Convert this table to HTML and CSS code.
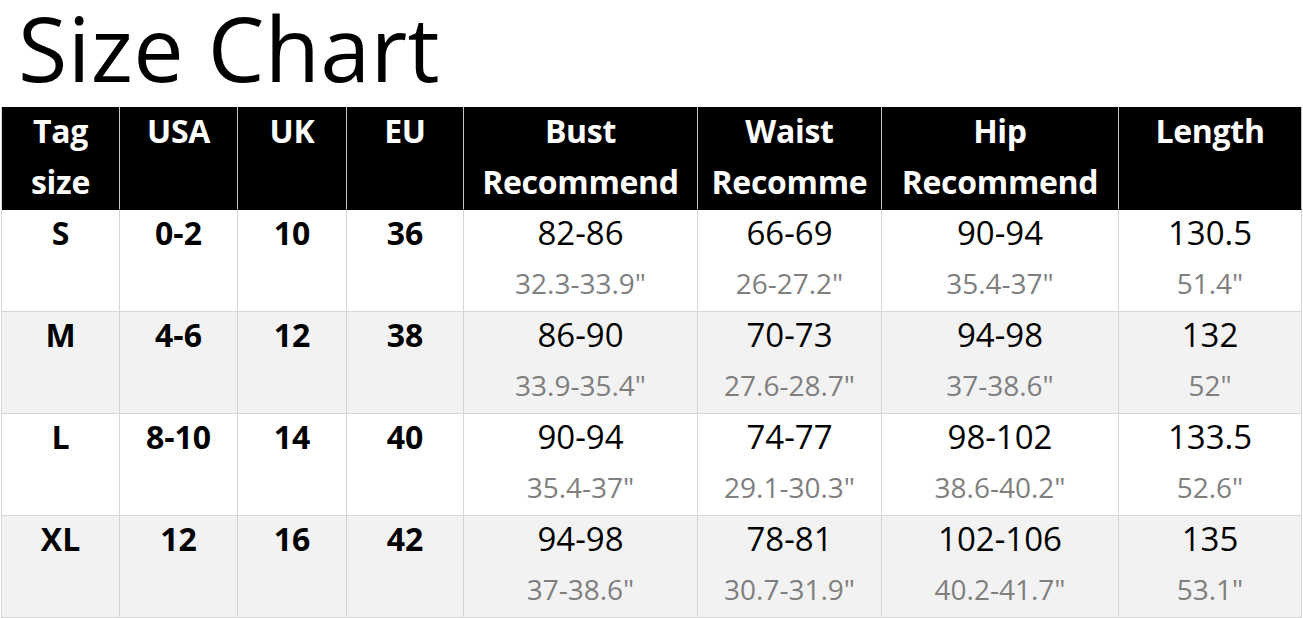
FILE: index.html
```html
<!DOCTYPE html>
<html lang="en">
<head>
<meta charset="utf-8">
<title>Size Chart</title>
<link rel="stylesheet" href="styles.css">
</head>
<body>
<h1 class="title">Size Chart</h1>
<div class="chart">
  <div class="cell head"><div class="htext">Tag<br>size</div></div>
  <div class="cell head"><div class="htext">USA</div></div>
  <div class="cell head"><div class="htext">UK</div></div>
  <div class="cell head"><div class="htext">EU</div></div>
  <div class="cell head"><div class="htext">Bust<br>Recommend</div></div>
  <div class="cell head"><div class="htext">Waist<br>Recomme</div></div>
  <div class="cell head"><div class="htext">Hip<br>Recommend</div></div>
  <div class="cell head"><div class="htext">Length</div></div>

  <div class="cell"><div class="bold">S</div></div>
  <div class="cell"><div class="bold">0-2</div></div>
  <div class="cell"><div class="bold">10</div></div>
  <div class="cell"><div class="bold">36</div></div>
  <div class="cell"><div class="val">82-86</div><div class="inch">32.3-33.9"</div></div>
  <div class="cell"><div class="val">66-69</div><div class="inch">26-27.2"</div></div>
  <div class="cell"><div class="val">90-94</div><div class="inch">35.4-37"</div></div>
  <div class="cell"><div class="val">130.5</div><div class="inch">51.4"</div></div>

  <div class="cell alt"><div class="bold">M</div></div>
  <div class="cell alt"><div class="bold">4-6</div></div>
  <div class="cell alt"><div class="bold">12</div></div>
  <div class="cell alt"><div class="bold">38</div></div>
  <div class="cell alt"><div class="val">86-90</div><div class="inch">33.9-35.4"</div></div>
  <div class="cell alt"><div class="val">70-73</div><div class="inch">27.6-28.7"</div></div>
  <div class="cell alt"><div class="val">94-98</div><div class="inch">37-38.6"</div></div>
  <div class="cell alt"><div class="val">132</div><div class="inch">52"</div></div>

  <div class="cell"><div class="bold">L</div></div>
  <div class="cell"><div class="bold">8-10</div></div>
  <div class="cell"><div class="bold">14</div></div>
  <div class="cell"><div class="bold">40</div></div>
  <div class="cell"><div class="val">90-94</div><div class="inch">35.4-37"</div></div>
  <div class="cell"><div class="val">74-77</div><div class="inch">29.1-30.3"</div></div>
  <div class="cell"><div class="val">98-102</div><div class="inch">38.6-40.2"</div></div>
  <div class="cell"><div class="val">133.5</div><div class="inch">52.6"</div></div>

  <div class="cell alt"><div class="bold">XL</div></div>
  <div class="cell alt"><div class="bold">12</div></div>
  <div class="cell alt"><div class="bold">16</div></div>
  <div class="cell alt"><div class="bold">42</div></div>
  <div class="cell alt"><div class="val">94-98</div><div class="inch">37-38.6"</div></div>
  <div class="cell alt"><div class="val">78-81</div><div class="inch">30.7-31.9"</div></div>
  <div class="cell alt"><div class="val">102-106</div><div class="inch">40.2-41.7"</div></div>
  <div class="cell alt"><div class="val">135</div><div class="inch">53.1"</div></div>
</div>
</body>
</html>
```

FILE: styles.css
```css
html, body {
  margin: 0;
  padding: 0;
  background: #ffffff;
}

body {
  font-family: "Open Sans", "Noto Sans", sans-serif;
  color: #000000;
}

.title {
  margin: 0 0 13px 0;
  padding-left: 18px;
  font-size: 90px;
  font-weight: 400;
  line-height: 94px;
  letter-spacing: 0.3px;
}

.chart {
  display: grid;
  grid-template-columns: 118px 118px 109px 117px 234px 184px 237px 183px;
  grid-template-rows: 103px repeat(4, 102px);
  margin-left: 1px;
  border-left: 1px solid #d6d6d6;
  width: max-content;
}

.cell {
  box-sizing: border-box;
  border-right: 1px solid #d6d6d6;
  border-bottom: 1px solid #d6d6d6;
  text-align: center;
  overflow: hidden;
  background: #ffffff;
}

.cell.alt {
  background: #f2f2f2;
}

.cell.head {
  background: #000000;
  color: #ffffff;
  border-right-color: #c8c8c8;
  border-bottom-color: #000000;
}

.htext {
  margin-top: -2px;
  font-size: 32px;
  font-weight: 700;
  line-height: 51px;
  letter-spacing: -0.3px;
}

.bold {
  font-size: 32px;
  font-weight: 700;
  line-height: 46px;
}

.val {
  font-size: 33px;
  font-weight: 400;
  line-height: 46px;
}

.inch {
  font-size: 28px;
  font-weight: 400;
  line-height: 54px;
  color: #7f7f7f;
}
```
